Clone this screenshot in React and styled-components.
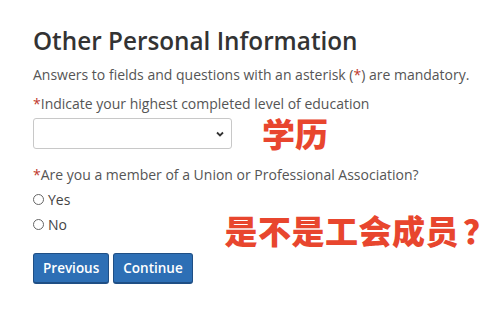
import styled, { createGlobalStyle } from "styled-components";

const Global = createGlobalStyle`
  body {
    margin: 0;
    background: #fff;
    font-family: "Open Sans", "Noto Sans", sans-serif;
    color: #555;
  }
`;

const Page = styled.div`
  width: 500px;
  height: 320px;
  box-sizing: border-box;
  padding: 26px 0 0 33px;
  display: flex;
  flex-direction: column;
`;

const Title = styled.h2`
  margin: 0;
  font-size: 24.3px;
  font-weight: 600;
  color: #333;
  line-height: 30px;
`;

const Note = styled.p`
  margin: 9px 0 0;
  font-size: 14px;
  line-height: 19px;
  color: #555;
`;

const Label = styled.div`
  margin-top: ${(p) => p.$top || 0}px;
  font-size: 14px;
  line-height: 19px;
  color: #555;
`;

const Star = styled.span`
  color: #c0392b;
`;

const FieldRow = styled.div`
  display: flex;
  align-items: center;
  gap: 30px;
  margin-top: 4px;
`;

const Select = styled.div`
  width: 199px;
  height: 31px;
  box-sizing: border-box;
  border: 1px solid #c8c8c8;
  border-radius: 3px;
  display: flex;
  align-items: center;
  justify-content: flex-end;
  padding-right: 6px;
`;

const Tag = styled.span`
  font-family: "Noto Sans CJK SC", sans-serif;
  font-weight: 900;
  color: #e8462e;
  font-size: ${(p) => p.$size}px;
  line-height: 1;
  letter-spacing: ${(p) => p.$spacing || 0}px;
`;

const Question = styled.span`
  margin-left: 4px;
`;

const ChoiceRow = styled.div`
  display: flex;
  align-items: flex-start;
  margin-top: 6px;
`;

const Choices = styled.div`
  display: flex;
  flex-direction: column;
  gap: 6px;
`;

const Choice = styled.label`
  display: flex;
  align-items: center;
  gap: 4px;
  font-size: 14px;
  line-height: 19px;
  color: #444;
`;

const Radio = styled.span`
  width: 9px;
  height: 9px;
  border: 1px solid #666;
  border-radius: 50%;
`;

const Sticker = styled.div`
  margin: 24px 0 0 154px;
`;

const Buttons = styled.div`
  display: flex;
  gap: 4px;
  margin-top: 4px;
`;

const Button = styled.button`
  height: 31px;
  padding: 0 9px;
  border: 1px solid #1f4f85;
  border-bottom-width: 2px;
  border-radius: 3px;
  background: #2d6fb5;
  color: #fff;
  font-family: "Open Sans", sans-serif;
  font-size: 13.5px;
  font-weight: 600;
`;

const Chevron = () => (
  <svg width="10" height="10" viewBox="0 0 10 10">
    <path d="M2 3.5 L5 6.5 L8 3.5" fill="none" stroke="#333" strokeWidth="1.8" />
  </svg>
);

export default function App() {
  return (
    <>
      <Global />
      <Page>
        <Title>Other Personal Information</Title>
        <Note>
          Answers to fields and questions with an asterisk (<Star>*</Star>) are mandatory.
        </Note>
        <Label $top={10}>
          <Star>*</Star>Indicate your highest completed level of education
        </Label>
        <FieldRow>
          <Select>
            <Chevron />
          </Select>
          <Tag $size={33}>学历</Tag>
        </FieldRow>
        <Label $top={15}>
          <Star>*</Star>Are you a member of a Union or Professional Association?
        </Label>
        <ChoiceRow>
          <Choices>
            <Choice>
              <Radio />
              Yes
            </Choice>
            <Choice>
              <Radio />
              No
            </Choice>
          </Choices>
          <Sticker>
            <Tag $size={33} $spacing={0.5}>
              是不是工会成员<Question>？</Question>
            </Tag>
          </Sticker>
        </ChoiceRow>
        <Buttons>
          <Button>Previous</Button>
          <Button>Continue</Button>
        </Buttons>
      </Page>
    </>
  );
}
